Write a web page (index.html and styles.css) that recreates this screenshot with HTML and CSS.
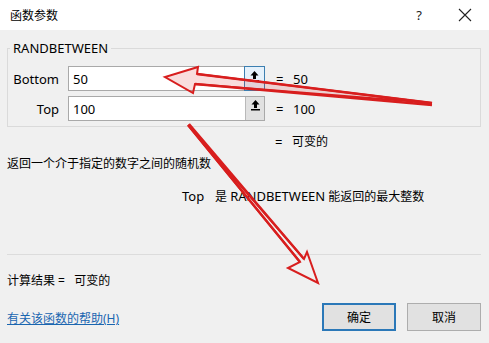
FILE: index.html
```html
<!DOCTYPE html>
<html lang="zh-CN">
<head>
    <meta charset="UTF-8">
    <title>函数参数</title>
    <link rel="stylesheet" href="styles.css">
</head>
<body>
    <div class="dialog">
        <div class="titlebar">
            <span class="title">函数参数</span>
            <span class="title-help">?</span>
            <span class="title-close">
                <svg width="14" height="14" viewBox="0 0 14 14"><path d="M1 1 L13 13 M13 1 L1 13" stroke="#222" stroke-width="1.1" fill="none"/></svg>
            </span>
        </div>

        <div class="content">
            <fieldset class="group">
                <legend class="en">RANDBETWEEN</legend>
                <div class="arg-row">
                    <label class="arg-label en">Bottom</label>
                    <div class="arg-input">
                        <span class="arg-value en">50</span>
                        <span class="ref-btn focused">
                            <svg width="11" height="12" viewBox="0 0 11 12"><path d="M5.5 1 L1.5 5.5 H4 V9 H7 V5.5 H9.5 Z" fill="#000"/><rect x="1" y="10" width="9" height="1.5" fill="#000"/></svg>
                        </span>
                    </div>
                    <span class="arg-eq en">=</span>
                    <span class="arg-result en">50</span>
                </div>
                <div class="arg-row">
                    <label class="arg-label en">Top</label>
                    <div class="arg-input">
                        <span class="arg-value en">100</span>
                        <span class="ref-btn">
                            <svg width="11" height="12" viewBox="0 0 11 12"><path d="M5.5 1 L1.5 5.5 H4 V9 H7 V5.5 H9.5 Z" fill="#000"/><rect x="1" y="10" width="9" height="1.5" fill="#000"/></svg>
                        </span>
                    </div>
                    <span class="arg-eq en">=</span>
                    <span class="arg-result en">100</span>
                </div>
            </fieldset>

            <div class="func-result">
                <span class="arg-eq en">=</span>
                <span class="arg-result">可变的</span>
            </div>

            <p class="func-desc">返回一个介于指定的数字之间的随机数</p>

            <p class="param-desc"><span class="param-name en">Top</span>是 <span class="en">RANDBETWEEN</span> 能返回的最大整数</p>

            <div class="separator"></div>

            <p class="calc-result">计算结果 =&nbsp;&nbsp; 可变的</p>

            <div class="footer">
                <a class="help-link" href="#">有关该函数的帮助(H)</a>
                <div class="buttons">
                    <button class="btn btn-default">确定</button>
                    <button class="btn">取消</button>
                </div>
            </div>
        </div>

        <svg class="annotations" width="489" height="343" viewBox="0 0 489 343">
            <g fill="none" stroke="#d81e1e" stroke-width="2" stroke-linejoin="miter">
                <path d="M432 103 L197 74 L198 67 L165 77 L193 93 L195 84 Z" fill="#d81e1e" fill-opacity="0.15"/>
                <path d="M432 103 L197 74 M432 105 L195 84" stroke-width="2.6"/>
                <path d="M188 125 L300 262 L288 268 L318 283 L307 252 L304 259 Z"/>
                <path d="M188 125 L300 262 M189 124 L304 259" stroke-width="2.4"/>
            </g>
        </svg>
    </div>
</body>
</html>
```

FILE: styles.css
```css
body {
    margin: 0;
    padding: 0;
    font-family: "Noto Sans", "Noto Sans CJK SC", sans-serif;
    font-size: 12px;
    color: #000;
    background-color: #f0f0f0;
}

.en {
    font-size: 13px;
}

.dialog {
    position: relative;
    width: 489px;
    height: 343px;
    overflow: hidden;
    background-color: #f0f0f0;
}

.titlebar {
    height: 30px;
    display: flex;
    align-items: center;
    background-color: #ffffff;
}

.title {
    margin-left: 10px;
    flex: 1;
    font-size: 12px;
}

.title-help {
    width: 14px;
    margin-right: 32px;
    font-size: 13px;
    color: #222;
    text-align: center;
}

.title-close {
    display: flex;
    margin-right: 17px;
}

.content {
    padding: 0 8px 0 7px;
}

.group {
    margin: 10px 0 0 0;
    padding: 0 0 5px 0;
    border: 1px solid #dadada;
    border-radius: 0;
}

.group legend {
    margin-left: 2px;
    padding: 0 3px;
    line-height: 16px;
}

.arg-row {
    display: flex;
    align-items: center;
    height: 25px;
    margin-top: 5px;
}

.arg-row:first-of-type {
    margin-top: 10px;
}

.arg-label {
    width: 51px;
    text-align: right;
    margin-right: 9px;
}

.arg-input {
    width: 195px;
    height: 23px;
    display: flex;
    align-items: center;
    border: 1px solid #a9a9a9;
    background-color: #ffffff;
}

.arg-value {
    flex: 1;
    padding-left: 4px;
}

.ref-btn {
    width: 19px;
    height: 23px;
    display: flex;
    align-items: flex-start;
    justify-content: center;
    padding-top: 2px;
    box-sizing: border-box;
    background-color: #e1e1e1;
    border-left: 1px solid #b9b9b9;
}

.ref-btn.focused {
    width: 21px;
    height: 25px;
    margin-right: -1px;
    padding-top: 3px;
    border: 1px solid #3c7fb1;
    background-color: #e5f1fb;
}

.arg-eq {
    margin-left: 11px;
    width: 17px;
}

.func-result {
    display: flex;
    align-items: center;
    height: 16px;
    line-height: 16px;
    margin: 7px 0 0 268px;
}

.func-result .arg-eq {
    margin-left: 0;
}

.func-desc {
    margin: 6px 0 0 0;
    line-height: 16px;
}

.param-desc {
    margin: 16px 0 0 175px;
    line-height: 16px;
}

.param-name {
    display: inline-block;
    width: 33px;
}

.separator {
    height: 1px;
    margin-top: 49px;
    background-color: #dcdcdc;
}

.calc-result {
    margin: 18px 0 0 0;
    line-height: 16px;
}

.footer {
    display: flex;
    align-items: center;
    justify-content: space-between;
    margin-top: 14px;
}

.help-link {
    margin-top: 2px;
    color: #1a66b0;
    text-decoration: underline;
}

.buttons {
    display: flex;
    gap: 11px;
}

.btn {
    width: 74px;
    height: 28px;
    font-family: inherit;
    font-size: 12px;
    color: #000;
    background-color: #e1e1e1;
    border: 1px solid #adadad;
    border-radius: 0;
    padding: 0;
}

.btn-default {
    border: 2px solid #2b78b8;
}

.annotations {
    position: absolute;
    left: 0;
    top: 0;
    pointer-events: none;
}
```
